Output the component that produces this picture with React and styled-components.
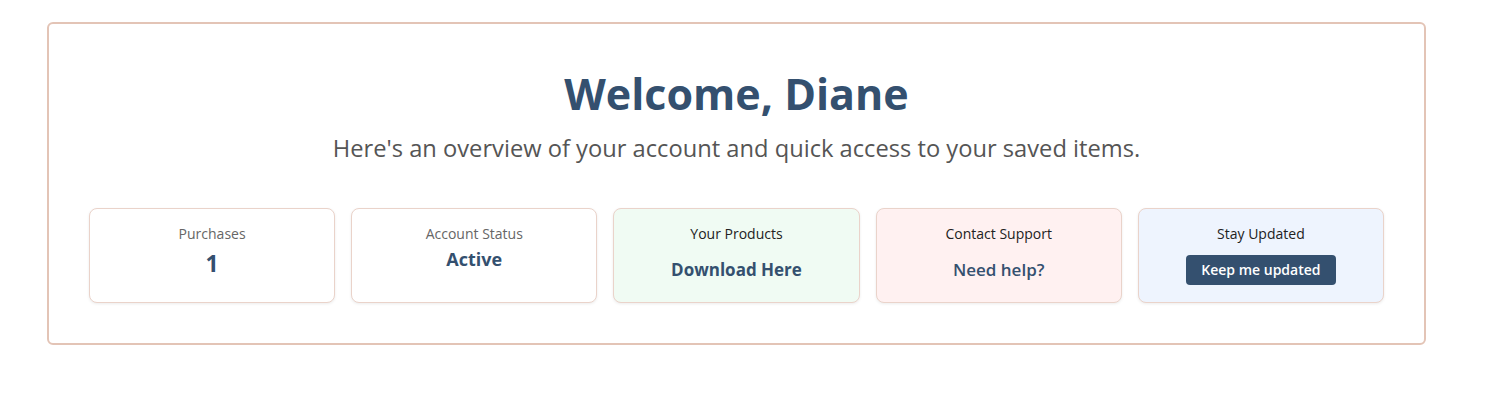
import React from 'react';
import styled, { createGlobalStyle } from 'styled-components';

const GlobalStyle = createGlobalStyle`
  body {
    margin: 0;
    background: #ffffff;
    font-family: "Open Sans", "Noto Sans", sans-serif;
  }
`;

const Page = styled.div`
  padding: 22px 61px 40px 47px;
`;

const Panel = styled.section`
  border: 2px solid #e3c4b6;
  border-radius: 6px;
  padding: 43px 40px 40px;
  text-align: center;
`;

const Title = styled.h1`
  margin: 0;
  font-size: 43px;
  font-weight: 700;
  line-height: 1.25;
  color: #34506f;
`;

const Subtitle = styled.p`
  margin: 12px 0 0;
  font-size: 23.7px;
  line-height: 1.3;
  color: #555555;
`;

const Grid = styled.div`
  margin-top: 44px;
  display: grid;
  grid-template-columns: repeat(5, 1fr);
  gap: 16px;
`;

const tints = {
  plain: '#ffffff',
  green: '#f0fbf3',
  pink: '#fff1f1',
  blue: '#eef4fe',
};

const Card = styled.div`
  height: 95px;
  box-sizing: border-box;
  border: 1px solid #ead3ca;
  border-radius: 8px;
  background: ${p => tints[p.$tint || 'plain']};
  box-shadow: 0 1px 3px rgba(0, 0, 0, 0.08);
  padding: 16px 12px 0;
  display: flex;
  flex-direction: column;
  align-items: center;
`;

const Label = styled.div`
  font-size: 14px;
  line-height: 18px;
  color: ${p => (p.$strong ? '#222222' : '#666666')};
  font-weight: ${p => (p.$strong ? 500 : 400)};
`;

const Value = styled.div`
  margin-top: ${p => p.$gap || 4}px;
  font-size: ${p => p.$size || 18}px;
  line-height: 1.2;
  font-weight: ${p => p.$weight || 700};
  color: #34506f;
`;

const Button = styled.button`
  margin-top: 12px;
  border: none;
  border-radius: 4px;
  background: #34506f;
  color: #ffffff;
  font-family: inherit;
  font-size: 14px;
  font-weight: 600;
  line-height: 18px;
  padding: 6px 15px;
  cursor: pointer;
`;

export default function App() {
  return (
    <>
      <GlobalStyle />
      <Page>
        <Panel>
          <Title>Welcome, Diane</Title>
          <Subtitle>Here's an overview of your account and quick access to your saved items.</Subtitle>
          <Grid>
            <Card>
              <Label>Purchases</Label>
              <Value $size={23} $gap={7}>1</Value>
            </Card>
            <Card>
              <Label>Account Status</Label>
              <Value $size={18} $gap={6}>Active</Value>
            </Card>
            <Card $tint="green">
              <Label $strong>Your Products</Label>
              <Value $size={17} $gap={17}>Download Here</Value>
            </Card>
            <Card $tint="pink">
              <Label $strong>Contact Support</Label>
              <Value $size={17} $gap={17} $weight={600}>Need help?</Value>
            </Card>
            <Card $tint="blue">
              <Label $strong>Stay Updated</Label>
              <Button>Keep me updated</Button>
            </Card>
          </Grid>
        </Panel>
      </Page>
    </>
  );
}
